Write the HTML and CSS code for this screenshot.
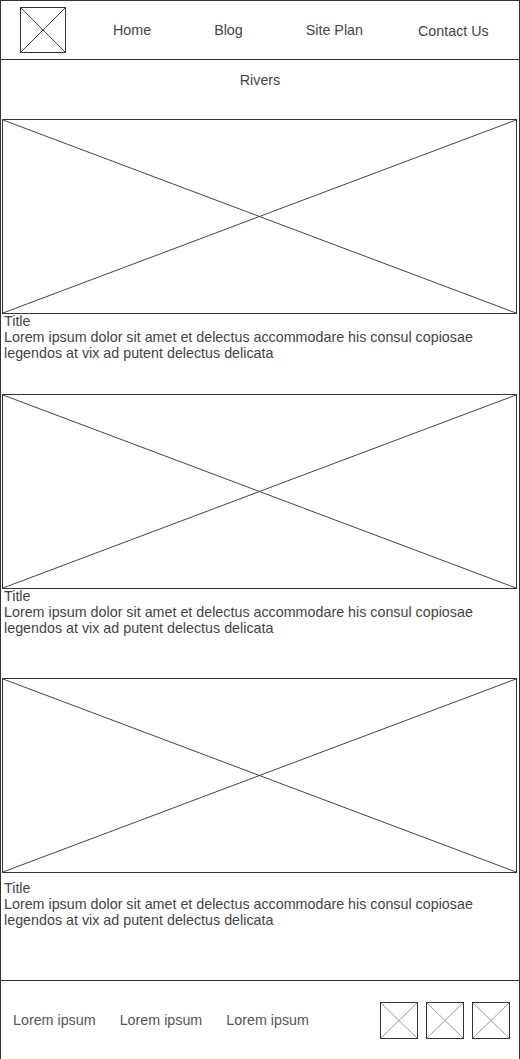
FILE: index.html
```html
<!DOCTYPE html>
<html lang="en">
<head>
<meta charset="utf-8">
<title>Rivers</title>
<link rel="stylesheet" href="styles.css">
</head>
<body>
<div class="page">
  <header class="header">
    <div class="ph logo">
      <svg viewBox="0 0 100 100" preserveAspectRatio="none"><line x1="0" y1="0" x2="100" y2="100"/><line x1="100" y1="0" x2="0" y2="100"/></svg>
    </div>
    <nav class="nav">
      <a class="nav-item nav-home">Home</a>
      <a class="nav-item nav-blog">Blog</a>
      <a class="nav-item nav-plan">Site Plan</a>
      <a class="nav-item nav-contact">Contact Us</a>
    </nav>
  </header>

  <h1 class="page-title">Rivers</h1>

  <section class="card card-1">
    <div class="ph card-image">
      <svg viewBox="0 0 100 100" preserveAspectRatio="none"><line x1="0" y1="0" x2="100" y2="100"/><line x1="100" y1="0" x2="0" y2="100"/></svg>
    </div>
    <div class="card-text">
      <div class="card-title">Title</div>
      <p class="card-body">Lorem ipsum dolor sit amet et delectus accommodare his consul copiosae legendos at vix ad putent delectus delicata</p>
    </div>
  </section>

  <section class="card card-2">
    <div class="ph card-image">
      <svg viewBox="0 0 100 100" preserveAspectRatio="none"><line x1="0" y1="0" x2="100" y2="100"/><line x1="100" y1="0" x2="0" y2="100"/></svg>
    </div>
    <div class="card-text">
      <div class="card-title">Title</div>
      <p class="card-body">Lorem ipsum dolor sit amet et delectus accommodare his consul copiosae legendos at vix ad putent delectus delicata</p>
    </div>
  </section>

  <section class="card card-3">
    <div class="ph card-image">
      <svg viewBox="0 0 100 100" preserveAspectRatio="none"><line x1="0" y1="0" x2="100" y2="100"/><line x1="100" y1="0" x2="0" y2="100"/></svg>
    </div>
    <div class="card-text">
      <div class="card-title">Title</div>
      <p class="card-body">Lorem ipsum dolor sit amet et delectus accommodare his consul copiosae legendos at vix ad putent delectus delicata</p>
    </div>
  </section>

  <footer class="footer">
    <div class="footer-links">
      <a class="footer-link">Lorem ipsum</a>
      <a class="footer-link">Lorem ipsum</a>
      <a class="footer-link">Lorem ipsum</a>
    </div>
    <div class="footer-icons">
      <div class="ph icon"><svg viewBox="0 0 100 100" preserveAspectRatio="none"><line x1="0" y1="0" x2="100" y2="100"/><line x1="100" y1="0" x2="0" y2="100"/></svg></div>
      <div class="ph icon"><svg viewBox="0 0 100 100" preserveAspectRatio="none"><line x1="0" y1="0" x2="100" y2="100"/><line x1="100" y1="0" x2="0" y2="100"/></svg></div>
      <div class="ph icon"><svg viewBox="0 0 100 100" preserveAspectRatio="none"><line x1="0" y1="0" x2="100" y2="100"/><line x1="100" y1="0" x2="0" y2="100"/></svg></div>
    </div>
  </footer>
</div>
</body>
</html>
```

FILE: styles.css
```css
* {
  box-sizing: border-box;
}

html, body {
  margin: 0;
  padding: 0;
  background: #ffffff;
}

body {
  font-family: "Liberation Sans", Arial, sans-serif;
  font-size: 14.3px;
  line-height: 16px;
  color: #444444;
}

.page {
  width: 520px;
  min-height: 1059px;
  border: 1px solid #333333;
  border-bottom: none;
}

/* placeholder boxes */
.ph {
  border: 1px solid #333333;
  background: #ffffff;
  overflow: hidden;
}

.ph svg {
  display: block;
  width: 100%;
  height: 100%;
}

.ph line {
  stroke: #444444;
  stroke-width: 1;
  vector-effect: non-scaling-stroke;
}

/* header */
.header {
  height: 59px;
  border-bottom: 1px solid #333333;
  display: flex;
  align-items: center;
  padding-left: 19px;
}

.logo {
  width: 46px;
  height: 46px;
  flex: none;
}

.nav {
  display: flex;
  align-items: center;
}

.nav-item {
  color: #444444;
  text-decoration: none;
  white-space: nowrap;
}

.nav-home {
  margin-left: 47px;
}

.nav-blog {
  margin-left: 63px;
}

.nav-plan {
  margin-left: 63px;
}

.nav-contact {
  margin-left: 55px;
  margin-top: 2px;
}

/* page title */
.page-title {
  margin: 0;
  padding-top: 12px;
  font-size: 14.3px;
  font-weight: normal;
  line-height: 16px;
  text-align: center;
  color: #444444;
}

/* cards */
.card-1 {
  margin-top: 31px;
}

.card-2 {
  margin-top: 33px;
}

.card-3 {
  margin-top: 42px;
}

.card-image {
  margin-left: 1px;
  width: 515px;
  height: 195px;
}

.card-text {
  padding-left: 3px;
  margin-top: -1px;
}

.card-3 .card-text {
  margin-top: 7px;
}

.card-title {
  line-height: 16px;
}

.card-body {
  margin: 0;
  line-height: 16px;
  width: 505px;
}

/* footer */
.footer {
  margin-top: 52px;
  border-top: 1px solid #333333;
  height: 79px;
  display: flex;
  align-items: center;
  padding-left: 12px;
  padding-right: 9px;
}

.footer-links {
  display: flex;
  gap: 24px;
}

.footer-link {
  color: #555555;
  text-decoration: none;
  white-space: nowrap;
}

.footer-icons {
  margin-left: auto;
  display: flex;
  gap: 8px;
}

.icon {
  width: 38px;
  height: 37px;
}

.icon line {
  stroke: #999999;
}
```
